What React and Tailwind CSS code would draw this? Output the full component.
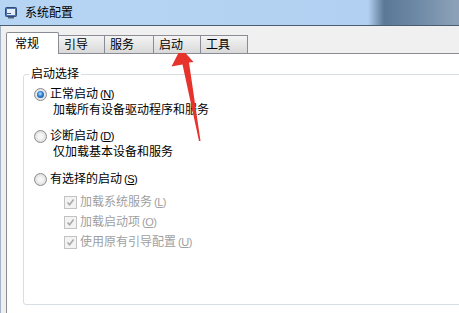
import React from 'react';

const Radio = ({ checked }) => (
  <span className="w-[13px] h-[13px] shrink-0 rounded-full border border-[#8a8c8e] bg-[radial-gradient(circle_at_50%_50%,#f6f6f6_25%,#d0d0d0_100%)] flex items-center justify-center">
    {checked && (
      <span className="w-[7px] h-[7px] rounded-full bg-[radial-gradient(circle_at_45%_40%,#bfe6ff_0%,#2a7fd4_45%,#0c3f7e_100%)]" />
    )}
  </span>
);

const Check = () => (
  <span className="w-[13px] h-[13px] shrink-0 border border-[#c2c2c2] bg-[#f3f3f3] flex items-center justify-center">
    <svg width="9" height="9" viewBox="0 0 9 9">
      <path d="M1.5 4.5 L3.6 6.8 L7.6 1.6" fill="none" stroke="#a9a9a9" strokeWidth="1.6" />
    </svg>
  </span>
);

const Key = ({ k }) => (
  <span className="ml-[2px] text-[11px] tracking-[-0.5px]">
    (<span className="underline">{k}</span>)
  </span>
);

const tabs = [
  { label: '引导', w: 'w-[46px]' },
  { label: '服务', w: 'w-[49px]' },
  { label: '启动', w: 'w-[47px]' },
  { label: '工具', w: 'w-[47px]' },
];

const App = () => {
  return (
    <div className="relative w-[459px] h-[313px] overflow-hidden bg-[#f0f0f0] text-[12px] text-black font-['Liberation_Sans','Noto_Sans_CJK_SC',sans-serif]">
      {/* title bar */}
      <div className="h-[26px] flex items-center border-b border-[#4b5d70] bg-[linear-gradient(90deg,#b6d4f3_0px,#b2d1f2_368px,#5b7896_384px,#6a86a3_412px,#8ea3b9_459px)]">
        <svg className="ml-[5px]" width="12" height="12" viewBox="0 0 12 12">
          <rect x="0.5" y="0.5" width="11" height="9" rx="1" fill="#4f74ad" stroke="#2f4b78" />
          <rect x="2" y="2" width="8" height="6" fill="#e4eefa" />
          <rect x="2" y="6" width="4" height="1" fill="#3b5a8a" />
          <rect x="3" y="10" width="6" height="1.5" fill="#56657a" />
        </svg>
        <span className="ml-[8px] leading-[16px]">系统配置</span>
      </div>

      <div className="flex h-[287px]">
        <div className="w-[3px] bg-[#c3daef] border-r border-[#a3b3c3]" />
        <div className="flex-1 flex flex-col pt-[6px] pl-[5px]">
          {/* tabs */}
          <div className="relative z-10 flex items-end h-[22px] -mb-px">
            <div className="w-[53px] h-[22px] bg-white border border-b-0 border-[#898c95] rounded-t-[2px] pl-[8px] pt-[3px] leading-[16px]">
              常规
            </div>
            {tabs.map((t) => (
              <div
                key={t.label}
                className={`${t.w} h-[18px] mb-px border-t border-r border-[#898c95] bg-linear-to-b from-[#f4f4f4] to-[#d9d9d9] pl-[5px] pt-[1px] leading-[16px]`}
              >
                {t.label}
              </div>
            ))}
          </div>

          {/* panel */}
          <div className="flex-1 bg-white border-t border-l border-[#898c95] pl-[16px] pt-[13px]">
            <fieldset className="w-[460px] h-[238px] border border-[#d5dfe5] rounded-[3px]">
              <legend className="ml-[5px] px-[2px] leading-[14px]">启动选择</legend>
              <div className="pl-[10px] pt-[5px]">
                <div className="flex items-center h-[16px] gap-[3px]">
                  <Radio checked />
                  <span className="leading-[16px]">正常启动<Key k="N" /></span>
                </div>
                <div className="ml-[19px] h-[16px] leading-[16px]">加载所有设备驱动程序和服务</div>

                <div className="mt-[10px] flex items-center h-[16px] gap-[3px]">
                  <Radio />
                  <span className="leading-[16px]">诊断启动<Key k="D" /></span>
                </div>
                <div className="ml-[19px] h-[16px] leading-[16px]">仅加载基本设备和服务</div>

                <div className="mt-[11px] flex items-center h-[16px] gap-[3px]">
                  <Radio />
                  <span className="leading-[16px]">有选择的启动<Key k="S" /></span>
                </div>

                <div className="mt-[5px] pl-[30px] text-[#a0a0a0]">
                  <div className="flex items-center h-[20px] gap-[3px]">
                    <Check />
                    <span>加载系统服务<Key k="L" /></span>
                  </div>
                  <div className="flex items-center h-[20px] gap-[3px]">
                    <Check />
                    <span>加载启动项<Key k="O" /></span>
                  </div>
                  <div className="flex items-center h-[20px] gap-[3px]">
                    <Check />
                    <span>使用原有引导配置<Key k="U" /></span>
                  </div>
                </div>
              </div>
            </fieldset>
          </div>
        </div>
      </div>

      {/* red annotation arrow */}
      <svg className="absolute inset-0 pointer-events-none" width="459" height="313" viewBox="0 0 459 313">
        <polygon
          points="181,48 193.5,62 189,62.5 200.5,141 199,141 182.5,64.5 171.5,66.5"
          fill="#e6332c"
        />
      </svg>
    </div>
  );
};

export default App;
